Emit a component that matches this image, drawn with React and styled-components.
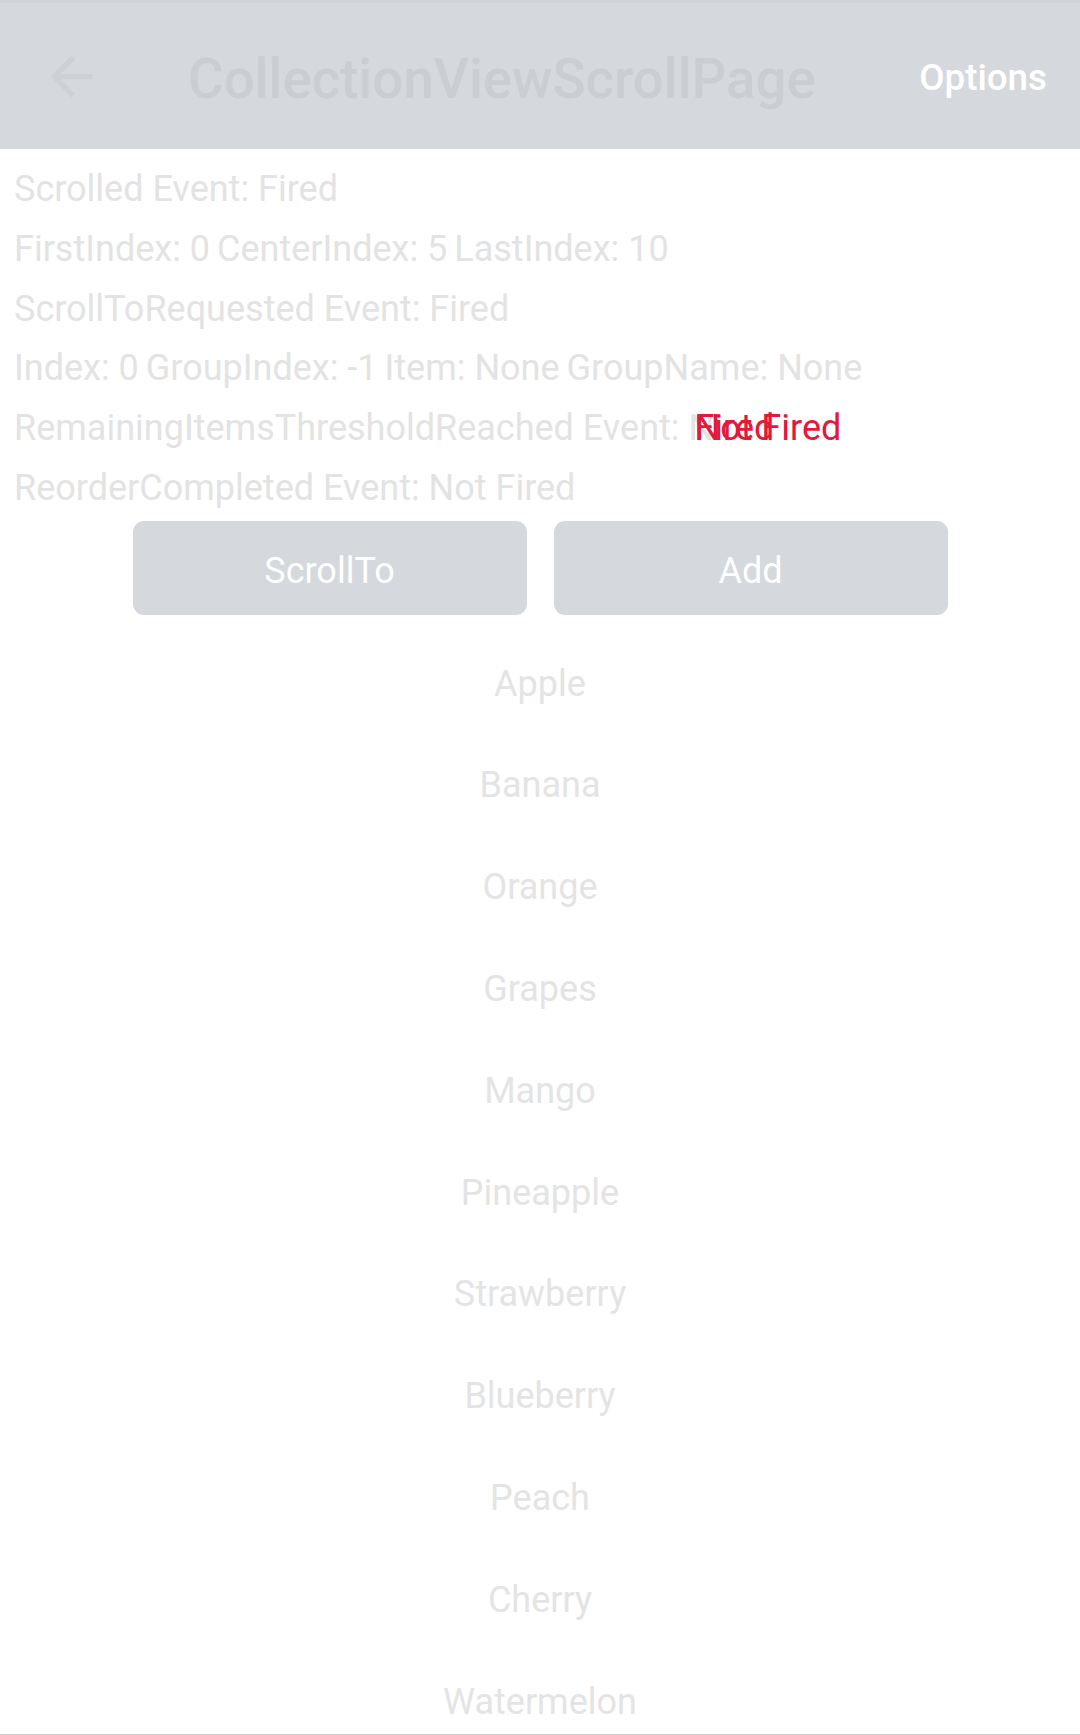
import React from "react";
import styled, { createGlobalStyle } from "styled-components";

const fruits = [
    "Apple",
    "Banana",
    "Orange",
    "Grapes",
    "Mango",
    "Pineapple",
    "Strawberry",
    "Blueberry",
    "Peach",
    "Cherry",
    "Watermelon",
    "Kiwi",
];

function App() {
    return (
        <>
            <GlobalStyle />
            <Page>
                <Header>
                    <BackButton>
                        <svg width="63" height="63" viewBox="0 0 24 24">
                            <path
                                fill="#cfd0d3"
                                d="M20 11H7.83l5.59-5.59L12 4l-8 8 8 8 1.41-1.41L7.83 13H20v-2z"
                            />
                        </svg>
                    </BackButton>
                    <Title>CollectionViewScrollPage</Title>
                    <Options>Options</Options>
                </Header>

                <Info>
                    <Line>Scrolled Event: Fired</Line>
                    <Line>
                        <span>FirstIndex: 0</span>
                        <span>CenterIndex: 5</span>
                        <span>LastIndex: 10</span>
                    </Line>
                    <Line>ScrollToRequested Event: Fired</Line>
                    <Line>
                        <span>Index: 0</span>
                        <span>GroupIndex: -1</span>
                        <span>Item: None</span>
                        <span>GroupName: None</span>
                    </Line>
                    <Line>
                        <span>
                            RemainingItemsThresholdReached Event:{" "}
                            <Overlap>
                                N
                                <RedText>Not Fired</RedText>
                                <RedText>Fired</RedText>
                            </Overlap>
                        </span>
                    </Line>
                    <Line>ReorderCompleted Event: Not Fired</Line>
                </Info>

                <Buttons>
                    <ActionButton>ScrollTo</ActionButton>
                    <ActionButton>Add</ActionButton>
                </Buttons>

                <List>
                    {fruits.map((fruit) => (
                        <Item key={fruit}>{fruit}</Item>
                    ))}
                </List>
            </Page>
        </>
    );
}

export default App;

const GlobalStyle = createGlobalStyle`
    body {
        margin: 0;
        background: #ffffff;
        font-family: Roboto, "Noto Sans", sans-serif;
    }
`;

const Page = styled.div`
    position: relative;
    width: 1080px;
    height: 1735px;
    overflow: hidden;
    background: #ffffff;
    box-sizing: border-box;
    border-bottom: 1px solid #cccccc;
`;

const Header = styled.div`
    display: flex;
    align-items: center;
    height: 149px;
    box-sizing: border-box;
    border-top: 3px solid #d0d3d7;
    background-color: #d5d8dc;
`;

const BackButton = styled.div`
    display: flex;
    width: 63px;
    height: 63px;
    margin-left: 40px;
`;

const Title = styled.div`
    margin-left: 85px;
    padding-top: 6px;
    font-size: 54.6px;
    font-weight: 500;
    color: #cbcdd0;
    white-space: nowrap;
`;

const Options = styled.div`
    margin-left: auto;
    margin-right: 33px;
    padding-top: 2px;
    font-size: 36.75px;
    font-weight: 500;
    color: #ffffff;
`;

const Info = styled.div`
    padding: 11px 0 0 14px;
`;

const Line = styled.div`
    display: flex;
    gap: 7px;
    height: 59.8px;
    line-height: 59.8px;
    font-size: 36px;
    color: #e3e3e3;
    white-space: nowrap;
`;

const Overlap = styled.span`
    position: relative;
    display: inline-block;
`;

const RedText = styled.span`
    position: absolute;
    left: 6px;
    top: 0;
    color: #e2193a;
`;

const Buttons = styled.div`
    display: flex;
    justify-content: center;
    gap: 27px;
    margin-top: 2px;
`;

const ActionButton = styled.button`
    width: 394px;
    height: 94px;
    border: none;
    border-radius: 11px;
    background-color: #d5d8dc;
    color: #ffffff;
    font-family: Roboto, "Noto Sans", sans-serif;
    font-size: 36px;
    padding: 6px 0 0;
`;

const List = styled.div`
    margin-top: 18px;
`;

const Item = styled.div`
    display: flex;
    align-items: center;
    justify-content: center;
    height: 101.8px;
    font-size: 36px;
    color: #e4e4e4;
`;
